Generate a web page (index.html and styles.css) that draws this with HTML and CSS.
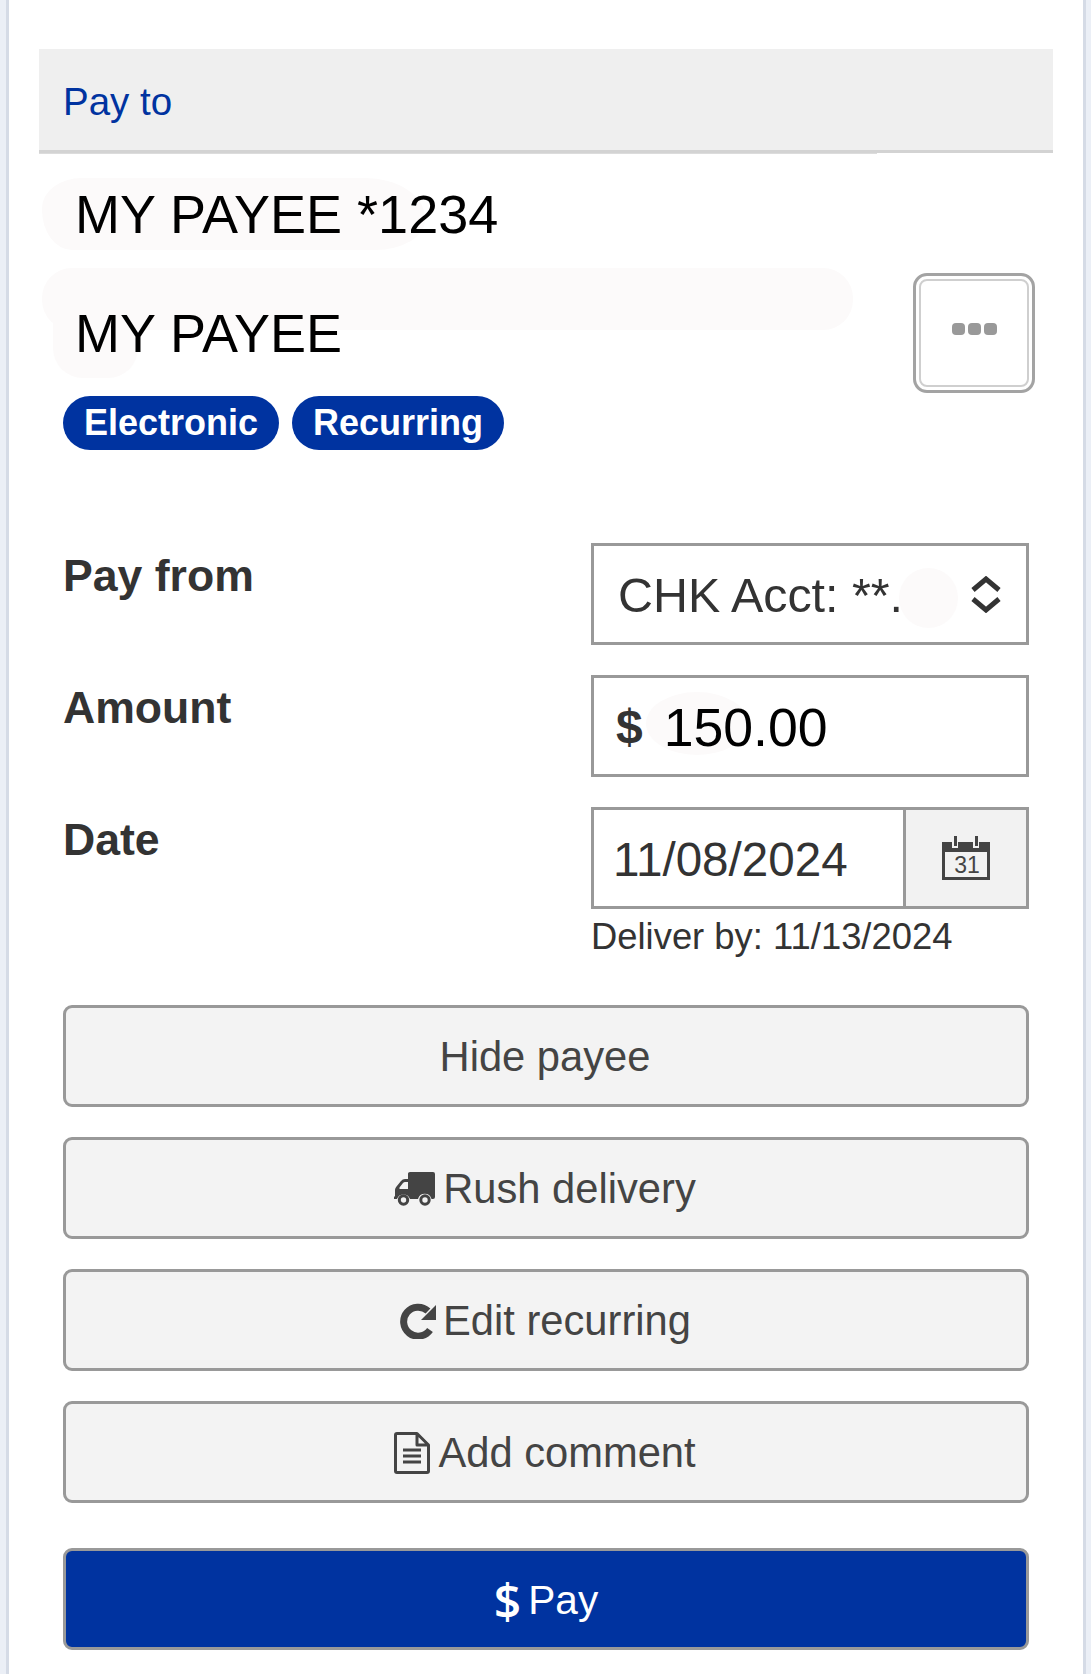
FILE: index.html
```html
<!DOCTYPE html>
<html lang="en">
<head>
    <meta charset="UTF-8">
    <meta name="viewport" content="width=device-width, initial-scale=1.0">
    <title>Pay to</title>
    <link rel="stylesheet" href="styles.css">
</head>
<body>
    <div class="panel">
        <div class="section-head">Pay to</div>

        <div class="payee">
            <div class="payee-info">
                <div class="payee-line payee-line-first">MY PAYEE *1234</div>
                <div class="payee-line payee-line-second">MY PAYEE</div>
                <div class="tags">
                    <span class="tag">Electronic</span>
                    <span class="tag">Recurring</span>
                </div>
            </div>
            <button class="more-button" aria-label="More">
                <span class="more-dots"><i></i><i></i><i></i></span>
            </button>
        </div>

        <div class="form">
            <div class="form-label">Pay from</div>
            <div class="field field-select">
                <span class="select-text">CHK Acct: **.</span>
                <svg class="select-arrows" width="32" height="37" viewBox="0 0 32 37">
                    <path d="M3 14 L16 3 L29 14 M3 23 L16 34 L29 23" fill="none" stroke="#333" stroke-width="5"/>
                </svg>
            </div>

            <div class="form-label">Amount</div>
            <div class="field field-amount">
                <span class="currency">$</span>
                <span class="amount-value">150.00</span>
            </div>

            <div class="form-label">Date</div>
            <div>
                <div class="field field-date">
                    <span class="date-value">11/08/2024</span>
                    <span class="date-button">
                        <svg width="48" height="44" viewBox="0 0 48 44">
                            <path d="M0 6 H10 V12 H16 V6 H31 V12 H37 V6 H48 V44 H0 Z" fill="#444"/>
                            <rect x="12" y="0" width="3" height="10" fill="#444"/>
                            <rect x="33" y="0" width="3" height="10" fill="#444"/>
                            <rect x="3" y="16" width="42" height="25" fill="#f2f2f2"/>
                            <text x="25" y="37" class="date-icon-text" text-anchor="middle">31</text>
                        </svg>
                    </span>
                </div>
                <div class="deliver-by">Deliver by: 11/13/2024</div>
            </div>
        </div>

        <div class="actions">
            <button class="action">Hide payee</button>
            <button class="action">
                <svg width="41" height="34" viewBox="0 0 41 34">
                    <path fill="#444" d="M14 1.5 Q14 0 16 0 H39 Q41 0 41 2 V25 Q41 27 39 27 H37.5 A7 7 0 0 0 24 27 H16 A7 7 0 0 0 3 27 H0 V25 L1 24 V18 Q1 16 2.5 14.5 L7 9 Q8.5 7 11 7 H14 Z M11 10 Q10 10 9 11 L5.5 15.5 V17 H14 V10 Z"/>
                    <circle cx="9.5" cy="28" r="4.2" fill="none" stroke="#444" stroke-width="3"/>
                    <circle cx="31" cy="28" r="4.2" fill="none" stroke="#444" stroke-width="3"/>
                </svg>
                Rush delivery
            </button>
            <button class="action action-tight">
                <svg width="37" height="36" viewBox="0 0 37 36">
                    <path fill="none" stroke="#444" stroke-width="7" d="M31 27 A14.5 14.5 0 1 1 29 8"/>
                    <path fill="#444" d="M37 2 V17 H22 Z"/>
                </svg>
                Edit recurring
            </button>
            <button class="action">
                <svg width="36" height="42" viewBox="0 0 36 42">
                    <path fill="none" stroke="#444" stroke-width="3" stroke-linejoin="round" d="M1.5 3 Q1.5 1.5 3 1.5 H23 L34.5 13 V39 Q34.5 40.5 33 40.5 H3 Q1.5 40.5 1.5 39 Z M23 1.5 V13 H34.5"/>
                    <path fill="none" stroke="#444" stroke-width="3" d="M9 18 H27 M9 24 H27 M9 30 H27"/>
                </svg>
                Add comment
            </button>
        </div>

        <button class="action action-primary"><span class="pay-sign">$</span>Pay</button>
    </div>
</body>
</html>
```

FILE: styles.css
```css
/* Global Styles */
html, body {
    margin: 0;
    padding: 0;
}

body {
    font-family: "Liberation Sans", Arial, sans-serif;
    background-color: #ebeff6;
    color: #333;
    padding: 0 5px 0 6px;
}

.panel {
    box-sizing: border-box;
    height: 1674px;
    padding: 49px 30px 0;
    background-color: #fff;
    border-left: 3px solid #d5dbe6;
    border-right: 3px solid #d5dbe6;
}

/* Header */
.section-head {
    position: relative;
    box-sizing: border-box;
    height: 104px;
    padding: 29px 0 0 24px;
    background-color: #efefef;
    border-bottom: 3px solid #d3d3d3;
    color: #0033a0;
    font-size: 38.5px;
    line-height: 48px;
}

.section-head::after {
    content: "";
    position: absolute;
    left: 0;
    bottom: -4px;
    width: 838px;
    height: 1px;
    background-color: #dcdcdc;
}

/* Payee */
.payee {
    display: flex;
    justify-content: space-between;
    padding: 31px 18px 0 24px;
}

.payee-line {
    position: relative;
    z-index: 0;
    padding-left: 12px;
    color: #000;
    font-size: 54px;
    line-height: 60px;
}

.payee-line::before {
    content: "";
    position: absolute;
    z-index: -1;
    background-color: #fcfafa;
}

.payee-line-first::before {
    left: -21px;
    top: -6px;
    width: 383px;
    height: 72px;
    border-radius: 40px 60px 50px 30px / 30px 40px 30px 40px;
}

.payee-line-second {
    margin-top: 59px;
}

.payee-line-second::before {
    left: -21px;
    top: -35px;
    width: 811px;
    height: 62px;
    border-radius: 30px;
}

.payee-line-second::after {
    content: "";
    position: absolute;
    z-index: -1;
    left: -10px;
    top: 0;
    width: 85px;
    height: 75px;
    border-radius: 0 0 30px 30px;
    background-color: #fcfafa;
}

.tags {
    display: flex;
    gap: 13px;
    margin-top: 33px;
}

.tag {
    height: 54px;
    padding: 0 21px;
    border-radius: 27px;
    background-color: #0033a0;
    color: #fff;
    font-size: 36px;
    font-weight: bold;
    line-height: 53px;
}

.more-button {
    box-sizing: border-box;
    display: flex;
    align-items: center;
    justify-content: center;
    width: 122px;
    height: 120px;
    margin-top: 89px;
    padding: 0 0 8px;
    background-color: #fff;
    border: 3px solid #a3a3a3;
    border-radius: 14px;
    box-shadow: inset 0 0 0 3px #fff, inset 0 0 0 5px #cfcfcf;
}

.more-dots {
    display: flex;
    gap: 3px;
}

.more-dots i {
    width: 13px;
    height: 12px;
    border-radius: 4px;
    background-color: #999;
}

/* Form */
.form {
    display: grid;
    grid-template-columns: 528px 438px;
    row-gap: 30px;
    margin: 93px 24px 0;
}

.form-label {
    color: #333;
    font-size: 44.6px;
    font-weight: bold;
    line-height: 56px;
    padding-top: 5px;
}

.field {
    box-sizing: border-box;
    display: flex;
    align-items: center;
    height: 102px;
    padding-top: 1px;
    background-color: #fff;
    border: 3px solid #999;
}

.field-select {
    position: relative;
    z-index: 0;
    justify-content: space-between;
    padding: 1px 24px 0;
}

.field-select::before {
    content: "";
    position: absolute;
    z-index: -1;
    left: 305px;
    top: 22px;
    width: 59px;
    height: 60px;
    border-radius: 50%;
    background-color: #fcfafa;
}

.select-text {
    font-size: 48.4px;
}

.field-amount {
    position: relative;
    z-index: 0;
    padding-left: 22px;
}

.field-amount::before {
    content: "";
    position: absolute;
    z-index: -1;
    left: 52px;
    top: 14px;
    width: 102px;
    height: 63px;
    border-radius: 50%;
    background-color: #fcfafa;
}

.currency {
    font-size: 48px;
    font-weight: bold;
}

.amount-value {
    margin-left: 21px;
    color: #000;
    font-size: 53.6px;
}

.field-date {
    position: relative;
    padding: 0 0 0 19px;
}

.date-value {
    flex: 1;
    padding-top: 3px;
    font-size: 47.6px;
}

.date-button {
    display: flex;
    align-items: center;
    justify-content: center;
    align-self: stretch;
    width: 120px;
    background-color: #f2f2f2;
    border-left: 3px solid #999;
}

.date-icon-text {
    font-family: "Liberation Sans", Arial, sans-serif;
    font-size: 23px;
    fill: #444;
}

.deliver-by {
    margin-top: 3px;
    font-size: 36.4px;
    line-height: 50px;
}

/* Buttons */
.actions {
    display: flex;
    flex-direction: column;
    gap: 30px;
    margin: 43px 24px 0;
}

.action {
    box-sizing: border-box;
    display: flex;
    align-items: center;
    justify-content: center;
    gap: 8px;
    width: 966px;
    height: 102px;
    padding: 2px 2px 0 0;
    background-color: #f3f3f3;
    border: 3px solid #999;
    border-radius: 9px;
    color: #444;
    font-family: "Liberation Sans", Arial, sans-serif;
    font-size: 41.7px;
}

.action-tight {
    gap: 7px;
}

.action-primary {
    gap: 7px;
    margin: 45px 24px 0;
    padding: 2px 0 0;
    background-color: #0033a0;
    color: #fff;
    font-size: 40.6px;
}

.pay-sign {
    font-family: "Open Sans", sans-serif;
    font-weight: 600;
    font-size: 48px;
}
```
